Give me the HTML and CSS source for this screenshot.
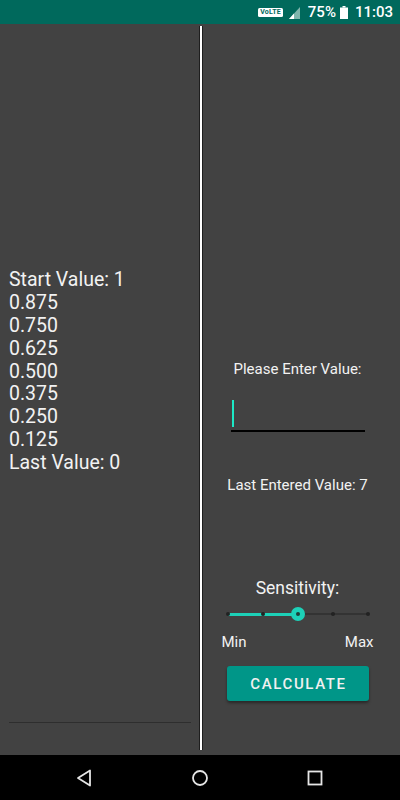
FILE: index.html
```html
<!DOCTYPE html>
<html>
<head>
<meta charset="utf-8">
<link rel="stylesheet" href="styles.css">
</head>
<body>
<div class="phone">
  <div class="statusbar">
    <span class="volte">VoLTE</span>
    <svg class="signal" width="12" height="12" viewBox="0 0 12 12">
      <polygon points="11,0 11,12 0,12" fill="#7fb5ad"/>
      <polygon points="5,6.5 5,12 0,12" fill="#ffffff"/>
    </svg>
    <span class="pct">75%</span>
    <svg class="battery" width="8" height="13" viewBox="0 0 8 13">
      <rect x="2.5" y="0" width="3" height="1.5" fill="#fff"/>
      <rect x="0" y="1.5" width="8" height="11.5" fill="#fff"/>
    </svg>
    <span class="time">11:03</span>
  </div>
  <div class="main">
    <div class="left">
      <div class="values">
        <div>Start Value: 1</div>
        <div>0.875</div>
        <div>0.750</div>
        <div>0.625</div>
        <div>0.500</div>
        <div>0.375</div>
        <div>0.250</div>
        <div>0.125</div>
        <div>Last Value: 0</div>
      </div>
      <div class="rule"></div>
    </div>
    <div class="divider"></div>
    <div class="right">
      <div class="prompt">Please Enter Value:</div>
      <div class="input"><span class="cursor"></span></div>
      <div class="last">Last Entered Value: 7</div>
      <div class="sens">Sensitivity:</div>
      <div class="slider">
        <div class="track-inactive"></div>
        <div class="track-active"></div>
        <span class="tick t0"></span>
        <span class="tick t1"></span>
        <span class="tick t3"></span>
        <span class="tick t4"></span>
        <span class="thumb"></span>
      </div>
      <div class="minmax"><span>Min</span><span>Max</span></div>
      <button class="calc">CALCULATE</button>
    </div>
  </div>
  <div class="navbar">
    <svg width="18" height="18" viewBox="0 0 18 18"><polygon points="14,1.5 14,16.5 2,9" fill="none" stroke="#e6e6e6" stroke-width="1.8" stroke-linejoin="round"/></svg>
    <svg width="18" height="18" viewBox="0 0 18 18"><circle cx="9" cy="9" r="7" fill="none" stroke="#e6e6e6" stroke-width="1.8"/></svg>
    <svg width="18" height="18" viewBox="0 0 18 18"><rect x="2.5" y="2.5" width="13" height="13" fill="none" stroke="#e6e6e6" stroke-width="1.8"/></svg>
  </div>
</div>
</body>
</html>
```
FILE: styles.css
```css
* { box-sizing: border-box; }
html, body { margin: 0; padding: 0; }
body {
  background: #424242;
  font-family: Roboto, "Noto Sans", sans-serif;
  color: #f2f2f2;
}
.phone {
  width: 400px;
  height: 800px;
  display: flex;
  flex-direction: column;
  background: #424242;
}
.statusbar {
  height: 24px;
  background: #00695c;
  display: flex;
  align-items: center;
  justify-content: flex-end;
  padding-right: 7px;
  color: #fff;
}
.volte {
  background: #fff;
  color: #00695c;
  font-size: 7px;
  font-weight: 700;
  line-height: 8px;
  height: 9px;
  padding: 0 2px;
  border-radius: 1.5px;
  margin-right: 6px;
  letter-spacing: 0.2px;
}
.signal { margin-right: 7px; margin-top: 1px; }
.pct {
  font-size: 15px;
  font-weight: 500;
  margin-right: 4px;
}
.battery { margin-right: 7px; }
.time {
  font-size: 15px;
  font-weight: 500;
}
.main {
  height: 731px;
  display: flex;
}
.left {
  width: 199px;
  display: flex;
  flex-direction: column;
  padding: 0 8px 0 9px;
}
.values {
  flex: 1;
  display: flex;
  flex-direction: column;
  justify-content: center;
  font-size: 19.5px;
  line-height: 22.9px;
  padding-bottom: 2px;
}
.rule {
  height: 1px;
  background: #2e2e2e;
  margin-bottom: 32px;
}
.divider {
  width: 4px;
  margin: 2px 0 5px;
  background: #fff;
  border-left: 1px solid #1e1e1e;
  border-right: 1px solid #1e1e1e;
}
.right {
  flex: 1;
  display: flex;
  flex-direction: column;
  align-items: center;
  padding: 336px 8px 0 0;
}
.prompt {
  font-size: 15px;
  line-height: 18px;
}
.input {
  width: 134px;
  height: 33px;
  margin-top: 21px;
  border-bottom: 2px solid #000;
  position: relative;
  margin-left: 1px;
}
.cursor {
  position: absolute;
  left: 1px;
  top: 1px;
  width: 2px;
  height: 27px;
  background: #1de9c6;
}
.last {
  margin-top: 44px;
  font-size: 15px;
  line-height: 18px;
}
.sens {
  margin-top: 84px;
  font-size: 17.5px;
  line-height: 20px;
}
.slider {
  position: relative;
  width: 150px;
  height: 18px;
  margin-top: 7px;
}
.track-inactive {
  position: absolute;
  left: 5px; right: 5px; top: 8px;
  height: 2px;
  background: #333;
}
.track-active {
  position: absolute;
  left: 5px; width: 70px; top: 7.5px;
  height: 3px;
  background: #1dd1b8;
}
.tick {
  position: absolute;
  top: 7px;
  width: 4px; height: 4px;
  border-radius: 50%;
  background: #222;
}
.t0 { left: 3px; }
.t1 { left: 38px; }
.t3 { left: 108px; }
.t4 { left: 143px; }
.thumb {
  position: absolute;
  left: 68px; top: 2px;
  width: 14px; height: 14px;
  border-radius: 50%;
  background: #1dd1b8;
}
.thumb::after {
  content: "";
  position: absolute;
  left: 5px; top: 5px;
  width: 4px; height: 4px;
  border-radius: 50%;
  background: #1d3d38;
}
.minmax {
  width: 152px;
  display: flex;
  justify-content: space-between;
  font-size: 15px;
  line-height: 18px;
  margin-top: 10px;
}
.calc {
  margin-top: 15px;
  width: 142px;
  height: 35px;
  border: none;
  border-radius: 3px;
  background: #009688;
  color: #f0f0f0;
  font-family: Roboto, sans-serif;
  font-weight: 500;
  font-size: 15px;
  letter-spacing: 1.6px;
  padding: 0 0 0 2px;
  box-shadow: 0 2px 3px rgba(0,0,0,0.4);
}
.navbar {
  height: 45px;
  background: #000;
  display: flex;
  align-items: center;
  gap: 97px;
  padding-left: 76px;
}
```
